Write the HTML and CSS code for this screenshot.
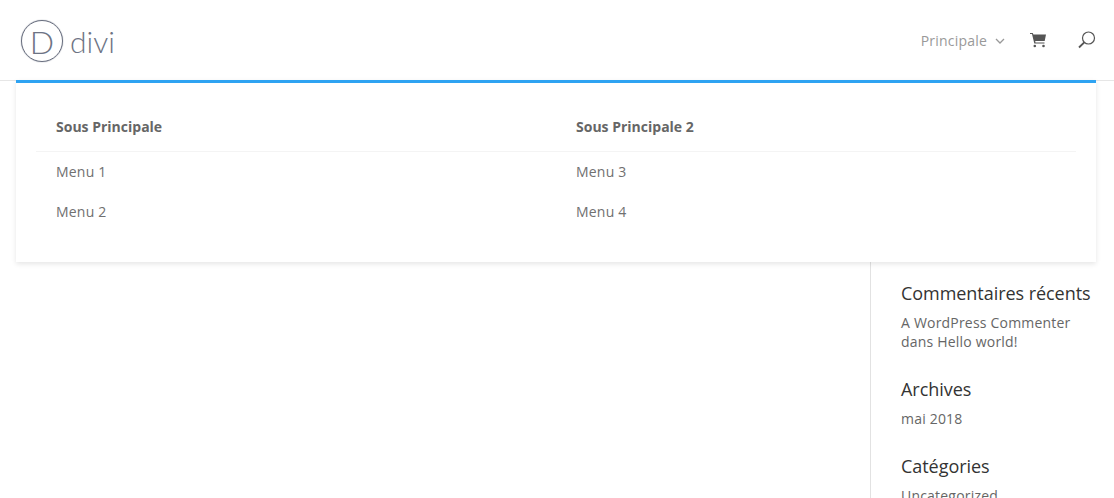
FILE: index.html
```html
<!DOCTYPE html>
<html lang="fr">

<head>
  <meta charset="UTF-8">
  <title>Divi</title>
  <link rel="stylesheet" href="styles.css">
</head>

<body>
  <header class="header">
    <a class="logo" href="#">
      <span class="logo-circle">D</span>
      <span class="logo-word">divi</span>
    </a>
    <nav class="nav">
      <a class="nav-link" href="#">Principale
        <svg class="nav-arrow" width="10" height="6" viewBox="0 0 10 6"><path d="M1 1l4 4 4-4" fill="none" stroke="#999" stroke-width="1.3"/></svg>
      </a>
      <a class="nav-icon cart" href="#">
        <svg width="16" height="15" viewBox="0 0 16 15"><path d="M0 0h2.800l.6 1.500H16l-1.300 6.500H5.200l.3 1.500h9v1H4.300L2 1H0z" fill="#555"/><circle cx="4.800" cy="13" r="1.300" fill="#555"/><circle cx="13.500" cy="13" r="1.300" fill="#555"/></svg>
      </a>
      <a class="nav-icon search" href="#">
        <svg width="18" height="18" viewBox="0 0 18 18"><circle cx="10.500" cy="7" r="6" fill="none" stroke="#555" stroke-width="1.200"/><path d="M6.300 11.300L1 16.500" fill="none" stroke="#555" stroke-width="1.800"/></svg>
      </a>
    </nav>
    <div class="mega-menu">
      <div class="mega-col">
        <div class="mega-title">Sous Principale</div>
        <a class="mega-item" href="#">Menu 1</a>
        <a class="mega-item" href="#">Menu 2</a>
      </div>
      <div class="mega-col">
        <div class="mega-title">Sous Principale 2</div>
        <a class="mega-item" href="#">Menu 3</a>
        <a class="mega-item" href="#">Menu 4</a>
      </div>
    </div>
  </header>

  <div class="page">
    <main class="content"></main>
    <aside class="sidebar">
      <div class="widget">
        <h4>Commentaires récents</h4>
        <p><a href="#">A WordPress Commenter</a> dans <a href="#">Hello world!</a></p>
      </div>
      <div class="widget">
        <h4>Archives</h4>
        <p><a href="#">mai 2018</a></p>
      </div>
      <div class="widget">
        <h4>Catégories</h4>
        <p><a href="#">Uncategorized</a></p>
      </div>
    </aside>
  </div>
</body>

</html>
```

FILE: styles.css
```css
body {
  margin: 0;
  height: 498px;
  overflow: hidden;
  background-color: #fff;
  font-family: "Open Sans", Arial, sans-serif;
  font-size: 14px;
  color: #666;
}

a {
  color: inherit;
  text-decoration: none;
}

.header {
  position: relative;
  display: flex;
  justify-content: space-between;
  align-items: center;
  height: 81px;
  box-sizing: border-box;
  padding: 0 18px 0 21px;
  border-bottom: 1px solid #e6e6e6;
}

/* logo */
.logo {
  display: flex;
  align-items: center;
  gap: 7px;
  margin-top: 2px;
  color: #6d7384;
  font-family: Lato, sans-serif;
  font-weight: 300;
}

.logo-circle {
  display: flex;
  justify-content: center;
  align-items: center;
  width: 40px;
  height: 40px;
  border: 1px solid #666c7d;
  border-radius: 50%;
  box-shadow: 0 0 1px #666c7d;
  font-size: 32px;
}

.logo-word {
  font-size: 30px;
  line-height: 40px;
}

/* top nav */
.nav {
  display: flex;
  align-items: center;
}

.nav-link {
  display: flex;
  align-items: center;
  gap: 8px;
  color: #999;
  letter-spacing: 0.2px;
}

.nav-arrow {
  margin-top: 2px;
}

.nav-icon {
  display: flex;
}

.cart {
  margin-left: 25px;
}

.search {
  margin-left: 32px;
}

/* dropdown */
.mega-menu {
  position: absolute;
  left: 16px;
  top: 80px;
  width: 1080px;
  height: 182px;
  box-sizing: border-box;
  display: flex;
  padding: 20px 20px 0;
  background-color: #fff;
  border-top: 3px solid #2ea3f2;
  box-shadow: 0 2px 5px rgba(0, 0, 0, 0.1);
  z-index: 2;
}

.mega-col {
  flex: 0 0 520px;
}

.mega-title {
  padding: 13px 20px 14px;
  border-bottom: 1px solid #f4f4f4;
  font-weight: 700;
  line-height: 21px;
}

.mega-item {
  display: block;
  padding: 10px 20px;
  line-height: 20px;
  color: #707070;
  letter-spacing: 0.2px;
}

/* page body */
.page {
  display: flex;
  justify-content: flex-end;
  height: 417px;
}

.sidebar {
  width: 244px;
  box-sizing: border-box;
  padding: 203px 0 0 30px;
  border-left: 1px solid #e2e2e2;
}

.widget {
  margin-bottom: 29px;
}

.widget h4 {
  margin: 0;
  padding-bottom: 10px;
  font-size: 18px;
  font-weight: 400;
  line-height: 19px;
  color: #333;
  letter-spacing: -0.05px;
}

.widget p {
  margin: 0;
  max-width: 190px;
  line-height: 19px;
  letter-spacing: 0.2px;
}
```
